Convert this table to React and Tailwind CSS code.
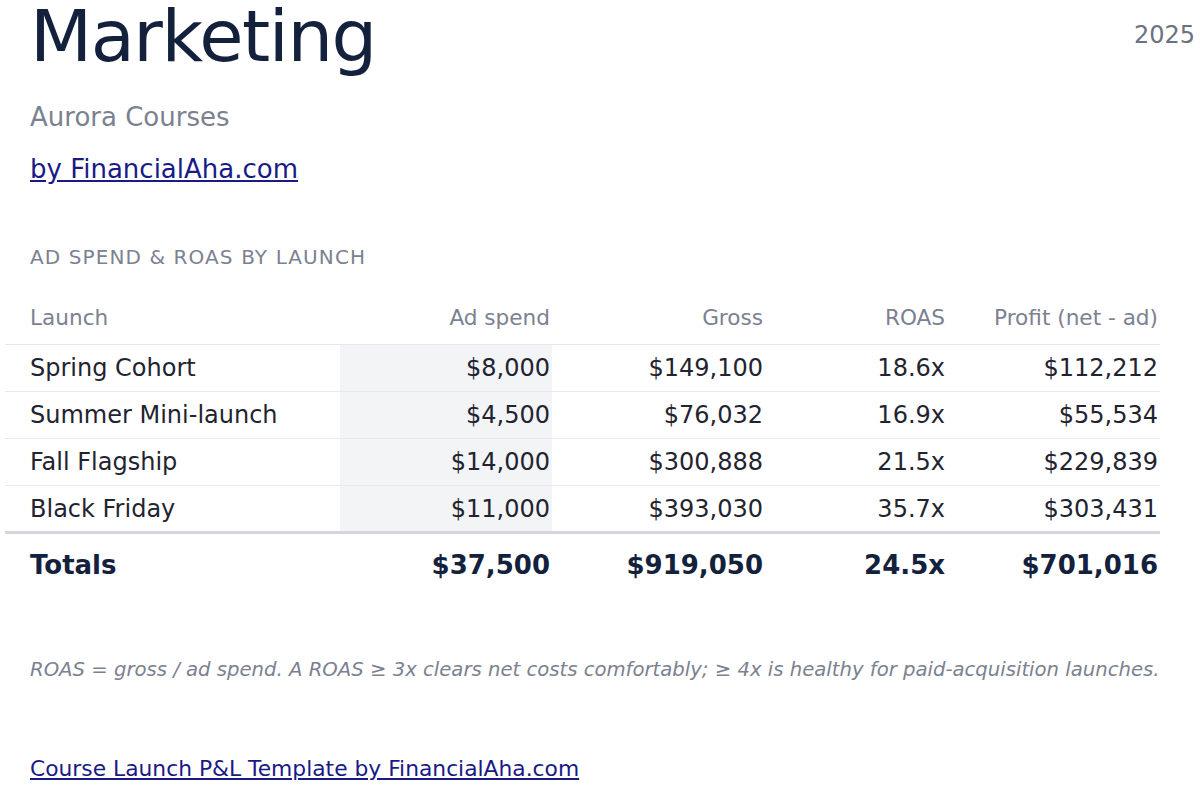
import React from 'react';

const launches = [
  { name: 'Spring Cohort', spend: '$8,000', gross: '$149,100', roas: '18.6x', profit: '$112,212' },
  { name: 'Summer Mini-launch', spend: '$4,500', gross: '$76,032', roas: '16.9x', profit: '$55,534' },
  { name: 'Fall Flagship', spend: '$14,000', gross: '$300,888', roas: '21.5x', profit: '$229,839' },
  { name: 'Black Friday', spend: '$11,000', gross: '$393,030', roas: '35.7x', profit: '$303,431' },
];

const font = { fontFamily: '"DejaVu Sans", Verdana, sans-serif' };

export default function App() {
  return (
    <div className="w-[1200px] h-[787px] overflow-hidden bg-white pl-[5px]" style={font}>
      <div className="flex justify-between items-start">
        <h1 className="-mt-[6px] pl-[25px] text-[72px] leading-[84px] tracking-[-0.02em] text-[#14213d] font-normal">
          Marketing
        </h1>
        <div className="mt-[21px] mr-[5px] text-[24px] leading-[28px] text-[#6b7280]">2025</div>
      </div>

      <div className="pl-[25px]">
        <p className="mt-[24px] text-[26px] leading-[30px] text-[#7b8190]">Aurora Courses</p>
        <a href="#" className="mt-[22px] block w-fit text-[26px] leading-[30px] text-[#1a1a86] underline">
          by FinancialAha.com
        </a>
        <h2 className="mt-[62px] text-[20px] leading-[23px] tracking-[1.1px] uppercase text-[#7b8190]">
          AD SPEND &amp; ROAS BY LAUNCH
        </h2>
      </div>

      <table className="mt-[26px] w-[1155px] table-fixed border-collapse">
        <colgroup>
          <col className="w-[335px]" />
          <col className="w-[212px]" />
          <col className="w-[213px]" />
          <col className="w-[182px]" />
          <col className="w-[213px]" />
        </colgroup>
        <thead>
          <tr className="border-b border-[#e5e7eb] text-[21.6px] leading-[25px] text-[#7b8190]">
            <th className="pl-[25px] pt-[10px] pb-[14px] text-left font-normal">Launch</th>
            <th className="pr-[2px] pt-[10px] pb-[14px] text-right font-normal">Ad spend</th>
            <th className="pr-[2px] pt-[10px] pb-[14px] text-right font-normal">Gross</th>
            <th className="pr-[2px] pt-[10px] pb-[14px] text-right font-normal">ROAS</th>
            <th className="pr-[2px] pt-[10px] pb-[14px] text-right font-normal">Profit (net - ad)</th>
          </tr>
        </thead>
        <tbody className="text-[24px] leading-[28px] text-[#1f2430]">
          {launches.map((row, i) => (
            <tr
              key={row.name}
              className={
                i === launches.length - 1
                  ? 'border-b-[3px] border-[#d4d6dc]'
                  : 'border-b border-[#e8e9ec]'
              }
            >
              <td className="pl-[25px] h-[47px] py-0">{row.name}</td>
              <td className="pr-[2px] h-[47px] text-right bg-[#f3f4f6]">{row.spend}</td>
              <td className="pr-[2px] h-[47px] text-right">{row.gross}</td>
              <td className="pr-[2px] h-[47px] text-right">{row.roas}</td>
              <td className="pr-[2px] h-[47px] text-right">{row.profit}</td>
            </tr>
          ))}
          <tr className="text-[26px] leading-[30px] font-bold text-[#14213d]">
            <td className="pl-[25px] pt-[16px] pb-[12px]">Totals</td>
            <td className="pr-[2px] pt-[16px] pb-[12px] text-right">$37,500</td>
            <td className="pr-[2px] pt-[16px] pb-[12px] text-right">$919,050</td>
            <td className="pr-[2px] pt-[16px] pb-[12px] text-right">24.5x</td>
            <td className="pr-[2px] pt-[16px] pb-[12px] text-right">$701,016</td>
          </tr>
        </tbody>
      </table>

      <div className="pl-[25px]">
        <p className="mt-[66px] text-[19.65px] leading-[23px] italic text-[#7b8190] whitespace-nowrap">
          ROAS = gross / ad spend. A ROAS ≥ 3x clears net costs comfortably; ≥ 4x is healthy for paid-acquisition launches.
        </p>
        <a href="#" className="mt-[75px] block w-fit text-[21.8px] leading-[25px] text-[#1a1a86] underline">
          Course Launch P&amp;L Template by FinancialAha.com
        </a>
      </div>
    </div>
  );
}
